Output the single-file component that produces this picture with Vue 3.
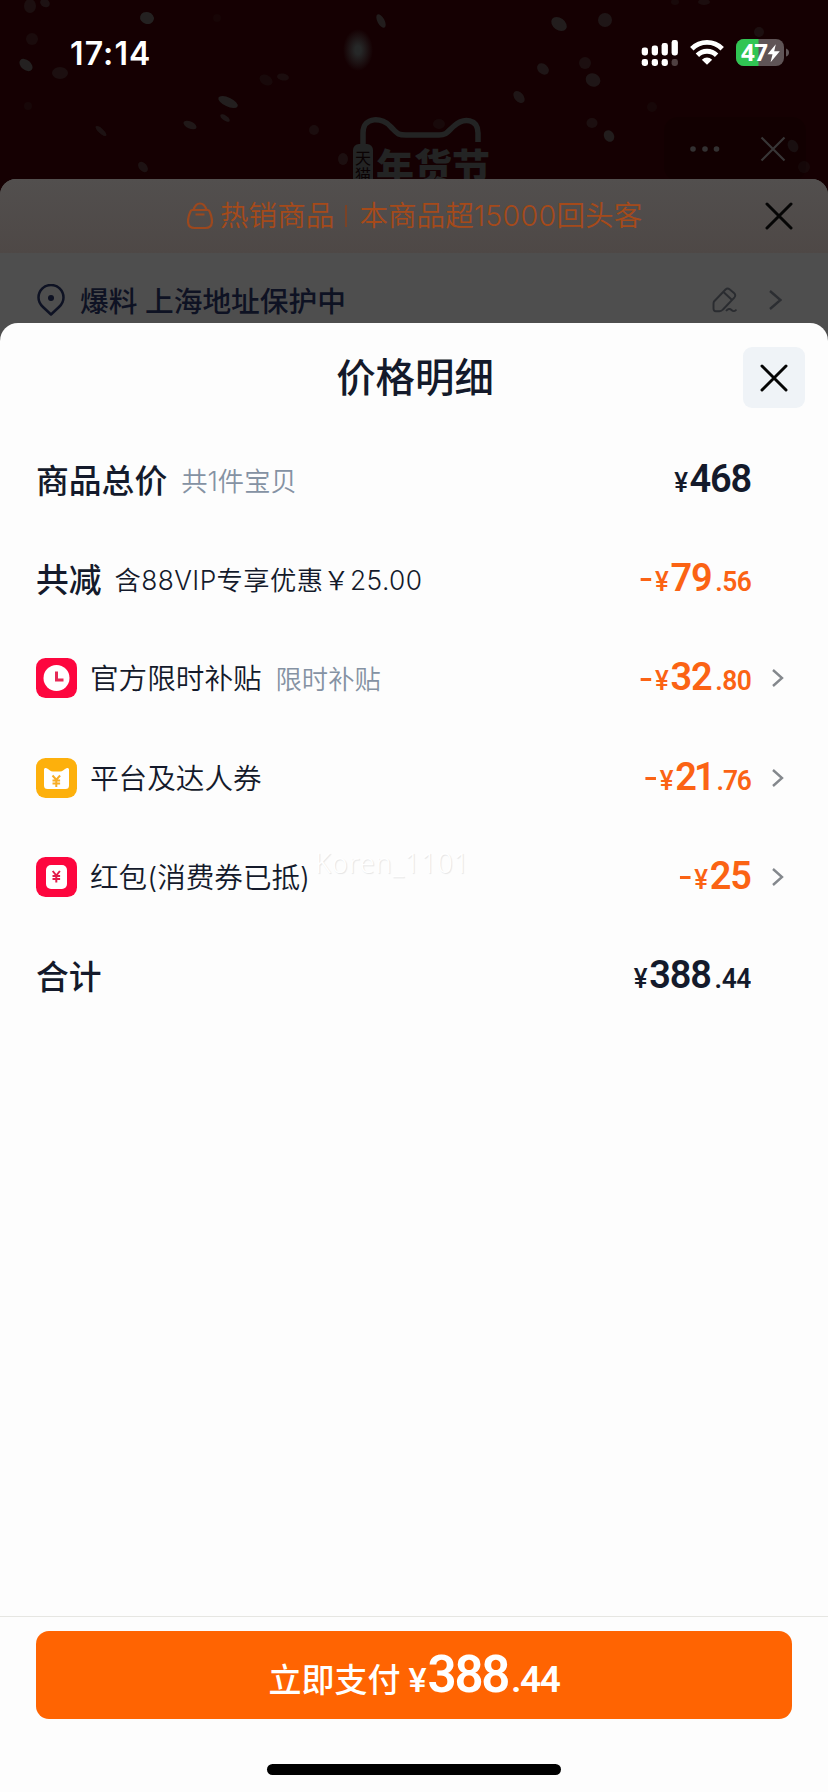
<script setup>
const rows = [
  { label: '商品总价', strong: true, note: '共1件宝贝', int: '468', dec: '', dark: true },
  { label: '共减', strong: true, note: '含88VIP专享优惠￥25.00', noteDark: true, minus: true, int: '79', dec: '.56' },
  { label: '官方限时补贴', icon: 'clock', note: '限时补贴', minus: true, int: '32', dec: '.80', arrow: true },
  { label: '平台及达人券', icon: 'coupon', minus: true, int: '21', dec: '.76', arrow: true, tight: true },
  { label: '红包(消费券已抵)', icon: 'packet', minus: true, int: '25', dec: '', arrow: true },
  { label: '合计', strong: true, int: '388', dec: '.44', dark: true },
]

// [x, y, rx, ry, rotation, opacity]
const flakes = [
  [30, 6, 6, 7, 0, 0.35], [45, 3, 5, 4, 30, 0.4], [147, 18, 7, 6, 15, 0.75], [32, 39, 6, 6, 0, 0.25],
  [26, 65, 7.5, 5, 40, 0.75], [60, 73, 8, 6, 0, 0.35], [28, 106, 4, 4, 0, 0.15], [217, 18, 4, 4, 0, 0.12],
  [228, 102, 10.5, 4.5, 25, 0.7], [225, 118, 5.5, 2.5, 35, 0.5], [190, 125, 7, 3.5, 25, 0.55],
  [101, 131, 7, 2.5, 42, 0.4], [143, 167, 6, 4, 50, 0.4], [266, 80, 7, 5, 30, 0.2], [283, 77, 6, 3.5, 10, 0.3],
  [314, 130, 5, 5, 0, 0.3], [343, 159, 5, 6, 0, 0.35], [381, 21, 7.5, 3.5, 62, 0.65],
  [559, 24, 8.5, 6, 35, 0.65], [605, 20, 7, 7, 0, 0.5], [543, 69, 6.5, 5, 40, 0.5], [585, 63, 6, 6, 0, 0.35],
  [593, 80, 7.5, 6.5, 25, 0.5], [519, 97, 7, 4.5, 50, 0.5], [592, 123, 5.5, 5, 0, 0.35], [609, 136, 5, 6, -30, 0.65],
  [759, 32, 5, 5, 0, 0.35], [652, 107, 5, 5, 0, 0.15], [793, 146, 5, 6.5, -30, 0.4], [804, 167, 6, 6, 0, 0.2],
  [439, 124, 6, 5, 0, 0.2], [704, 2, 6, 3, 0, 0.3], [675, 2, 4, 3, 0, 0.2],
]
</script>

<template>
  <div class="screen">
    <header class="top">
      <svg class="festival" width="828" height="179" viewBox="0 0 828 179">
        <defs>
          <radialGradient id="glow"><stop offset="0.2" stop-color="#262828" /><stop offset="1" stop-color="#262828" stop-opacity="0" /></radialGradient>
        </defs>
        <ellipse v-for="(f, i) in flakes" :key="i" :cx="f[0]" :cy="f[1]" :rx="f[2]" :ry="f[3]" :opacity="f[5]" :transform="`rotate(${f[4]} ${f[0]} ${f[1]})`" fill="#2a2c2c" />
        <ellipse cx="358" cy="50" rx="15" ry="21" fill="url(#glow)" />
        <path d="M363 144V133C363 116 383 117 391 127C398 134 398 135 406 135H439C447 135 448 131 454 126C464 117 478 119 478 133V142" fill="none" stroke="#232424" stroke-width="5.500" />
        <rect x="353" y="144" width="20" height="45" rx="6" fill="#232424" />
        <text x="363" y="164" class="tmall">天</text>
        <text x="363" y="181" class="tmall">猫</text>
        <text x="376" y="181" class="nianhuo">年货节</text>
        <rect x="664" y="117" width="142" height="64" rx="14" fill="#000" opacity="0.12" />
        <g fill="#333132"><circle cx="693" cy="149" r="2.800" /><circle cx="705" cy="149" r="2.800" /><circle cx="716.500" cy="149" r="2.800" /></g>
        <path d="M761.500 137.500L784.500 160.500M784.500 137.500L761.500 160.500" stroke="#383637" stroke-width="2.200" />
      </svg>
      <div class="status">
        <span class="time">17:14</span>
        <svg width="150" height="30" viewBox="640 38 150 30">
          <g fill="#fff">
            <rect x="641.700" y="47.500" width="6.300" height="8" rx="2.400" /><rect x="651.700" y="45.500" width="6.300" height="10" rx="2.400" />
            <rect x="661.600" y="43" width="6.300" height="12.500" rx="2.400" /><rect x="671.600" y="40" width="6.300" height="15.500" rx="2.400" />
            <rect x="641.700" y="59" width="6.300" height="7" rx="2.400" /><rect x="651.700" y="59" width="6.300" height="7" rx="2.400" />
            <rect x="661.600" y="59" width="6.300" height="7" rx="2.400" /><rect x="671.600" y="59" width="6.300" height="7" rx="2.400" opacity="0.25" />
            <path d="M707 64.700L701.800 59.700Q707 55.300 712.200 59.700Z" />
          </g>
          <path d="M691.800 48.700A21.500 21.500 0 0 1 722.200 48.700M697.400 55.200A13.600 13.600 0 0 1 716.600 55.200" fill="none" stroke="#fff" stroke-width="4.800" />
          <rect x="736" y="39" width="48" height="27" rx="8" fill="#5f5456" />
          <path d="M758.500 39H744A8 8 0 0 0 736 47V58A8 8 0 0 0 744 66H758.500Z" fill="#30c553" />
          <path d="M786 48.500Q789 49.500 789 52.500T786 56.500Z" fill="#5f5456" />
          <text x="741" y="60.800" class="battery">47</text>
          <path d="M775.800 44.200L767.500 54.300H772.500L770.600 62.200L779.800 51.200H774.200Z" fill="#fff" />
        </svg>
      </div>
    </header>

    <section class="order">
      <div class="hot">
        <svg class="bag" width="26" height="28" viewBox="0 0 26 28" fill="none" stroke="#9c481e" stroke-width="2.200">
          <path d="M5.500 8H20.500Q22 8 22.600 9.500Q25 15 25 19Q25 26 18.500 26H7.500Q1 26 1 19Q1 15 3.400 9.500Q4 8 5.500 8ZM6.500 8C8 3 10 1.500 13 1.500S18 3 19.500 8M8.500 12.500H17.500" />
        </svg>
        <span>热销商品</span><i class="bar"></i><span>本商品超<span class="num">15000</span>回头客</span>
        <svg class="hot-close" width="28" height="28" viewBox="0 0 28 28"><path d="M2 2L26 26M26 2L2 26" stroke="#050505" stroke-width="3" stroke-linecap="round" /></svg>
      </div>
      <div class="address">
        <svg width="28" height="32" viewBox="0 0 28 32"><path d="M14 30.500L6 23Q1.500 18.800 1.500 13.500A12.500 12.500 0 0 1 26.500 13.500Q26.500 18.800 22 23Z" fill="none" stroke="#0e1223" stroke-width="2.500" stroke-linejoin="round" /><circle cx="14" cy="14" r="3" fill="#0e1223" /></svg>
        <span class="addr-text">爆料 上海地址保护中</span>
        <svg width="25" height="26" viewBox="0 0 25 26" fill="none" stroke="#2a2c30" stroke-width="1.900"><path d="M2 14.500L13.500 2.500Q15.500 .8 17.500 2.300L22 6Q24.200 8 22.500 10.300L11 22.500Q9.500 24.300 7.500 24.300H4Q1.500 24.300 1.500 21.500V17Q1.500 15.500 2 14.500ZM11.500 5L19.500 12.500M14 24Q17 20.500 19.500 23T24.500 22.500" /></svg>
        <svg class="addr-arrow" width="13" height="20" viewBox="0 0 13 20"><path d="M1 1L11.500 10L1 19" fill="none" stroke="#2c2e32" stroke-width="2.400" /></svg>
      </div>
    </section>

    <main class="sheet">
      <div class="head">
        <h1>价格明细</h1>
        <button class="close" aria-label="关闭">
          <svg width="28" height="28" viewBox="0 0 28 28"><path d="M2 2L26 26M26 2L2 26" stroke="#050505" stroke-width="3" stroke-linecap="round" /></svg>
        </button>
      </div>

      <div class="rows">
        <div v-for="r in rows" :key="r.label" class="row">
          <svg v-if="r.icon" class="icon" width="41" height="40" viewBox="0 0 41 40">
            <rect width="41" height="40" rx="9.500" :fill="r.icon === 'coupon' ? '#fdb00c' : '#fd063e'" />
            <template v-if="r.icon === 'clock'">
              <circle cx="20.500" cy="20" r="13" fill="#fff" /><path d="M20.500 13.500V22H27.500" fill="none" stroke="#e62a57" stroke-width="3" />
            </template>
            <template v-else-if="r.icon === 'coupon'">
              <path d="M8 11.500Q8 9.500 10 10Q12 10.500 14 12.500Q15 13.500 17 13.500H24Q26 13.500 27 12.500Q29 10.500 31 10Q33 9.500 33 11.500V27.500Q33 31 29.500 31H11.500Q8 31 8 27.500Z" fill="#fff" />
              <path d="M16.500 17.500L20.300 21.700L24.100 17.500M20.300 21.500V29M16.500 22.500H24.100M16.500 25.500H24.100" fill="none" stroke="#f7ad25" stroke-width="2" />
            </template>
            <template v-else>
              <rect x="10" y="8" width="21" height="24" rx="5" fill="#fff" />
              <path d="M16.700 14L20.300 18.500L23.900 14M20.300 18V25.500M16.500 19H24.100M16.500 22H24.100" fill="none" stroke="#e21c4a" stroke-width="2" />
            </template>
          </svg>
          <span class="label" :class="{ strong: r.strong }">{{ r.label }}</span>
          <span v-if="r.note" class="note" :class="{ 'note-dark': r.noteDark }">{{ r.note }}</span>
          <span class="price" :class="{ dark: r.dark, tight: r.tight }"><i v-if="r.minus" class="minus"></i><span class="yen">¥</span><span class="int">{{ r.int }}</span><span v-if="r.dec" class="dec">{{ r.dec }}</span></span>
          <span class="arrow"><svg v-if="r.arrow" width="12" height="18" viewBox="0 0 12 18"><path d="M1 1L10 9L1 17" fill="none" stroke="#84888d" stroke-width="2.400" /></svg></span>
        </div>
      </div>
      <span class="mark">Koren_1101</span>

      <footer class="foot">
        <button class="pay"><span class="pay-text">立即支付</span><span class="pay-yen">¥</span><span class="pay-int">388</span><span class="pay-dec">.44</span></button>
        <div class="home"></div>
      </footer>
    </main>
  </div>
</template>

<style>
body { background: #fdfdfd; }
</style>

<style scoped>
* { box-sizing: border-box; }
.screen { width: 828px; height: 1792px; overflow: hidden; display: flex; flex-direction: column; background: #150002; font-family: Inter, "Noto Sans CJK SC", sans-serif; color: #141a2b; }
.top { height: 179px; flex: none; position: relative; }
.festival { position: absolute; inset: 0; }
.tmall { font: 400 16px "Noto Sans CJK SC", sans-serif; text-anchor: middle; fill: #0a0203; }
.nianhuo { font: 900 38px "Noto Sans CJK SC", sans-serif; fill: #232424; }
.status { position: relative; display: flex; justify-content: space-between; padding: 38px 38px 0 70px; }
.time { color: #fff; font-size: 32px; font-weight: 600; line-height: 32px; letter-spacing: 1.100px; }
.battery { font: 700 24px "Noto Sans", sans-serif; fill: #fff; letter-spacing: -0.500px; }

.order { height: 164px; flex: none; border-radius: 16px 16px 0 0; background: #4e4e4e; overflow: hidden; }
.hot { height: 74px; display: flex; align-items: center; padding-left: 187px; position: relative; background: linear-gradient(#524f4e, #4e4846); color: #a54a1a; font-size: 28.600px; font-weight: 350; line-height: 40px; white-space: nowrap; }
.hot > span { margin-top: -1px; }
.bag { margin-right: 7px; }
.bar { width: 2px; height: 22px; background: #7a4226; margin: 0 12px 0 11px; }
.num { letter-spacing: 0.300px; }
.hot-close { position: absolute; left: 765px; top: 23px; }
.address { display: flex; align-items: center; height: 94px; padding-left: 37px; }
.addr-text { font-size: 28.700px; font-weight: 500; margin: -2px 0 0 15px; color: #0e1223; flex: 1; }
.addr-arrow { margin: 0 46px 0 32px; }

.sheet { flex: 1; margin-top: -20px; border-radius: 18px 18px 0 0; background: #fdfdfd; display: flex; flex-direction: column; position: relative; }
.head { height: 107px; display: flex; justify-content: flex-end; padding: 24px 23px 0 0; position: relative; }
h1 { position: absolute; left: 2px; right: 0; top: 25px; margin: 0; text-align: center; font-size: 39.400px; line-height: 60px; font-weight: 500; }
.close { position: relative; width: 62px; height: 61px; padding: 0; border: 0; border-radius: 9px; background: #eff3f7; display: grid; place-items: center; }
.rows { padding: 0 35px 0 36px; }
.row { height: 99.300px; display: flex; align-items: center; white-space: nowrap; }
.icon { margin-right: 13px; }
.label { font-size: 28.600px; font-weight: 350; margin-top: -3px; }
.strong { font-size: 32.800px; font-weight: 500; }
.note { font-size: 26.300px; font-weight: 350; color: #8592a3; margin: -1px 0 0 14px; }
.note-dark { color: #141a2b; letter-spacing: 0.400px; margin-left: 13px; }
.price { margin-left: auto; display: flex; align-items: baseline; font-family: Roboto, sans-serif; font-weight: 500; color: #fb6314; line-height: 46px; position: relative; top: 1px; transform: scaleX(0.960); transform-origin: right; }
.price.dark { color: #141a2b; }
.minus { width: 11px; height: 3px; background: currentColor; align-self: center; margin-right: 4px; }
.yen { font-size: 27px; width: 15px; letter-spacing: -1px; }
.int { font-size: 39.500px; font-weight: 600; letter-spacing: -1.200px; margin-left: 1px; }
.dec { font-size: 27.500px; font-weight: 600; letter-spacing: -0.500px; margin-left: 4px; }
.tight .int { letter-spacing: -3px; }
.tight .dec { margin-left: 4px; letter-spacing: -1.200px; }
.arrow { width: 42px; display: flex; padding-left: 21px; }
.mark { position: absolute; left: 315px; top: 522px; font: 300 27px/36px "Noto Sans", sans-serif; letter-spacing: 0.900px; color: #fff; text-shadow: 1px 1px 1px #e4e4e4; }

.foot { margin-top: auto; height: 176px; border-top: 1px solid #e6e6e2; padding: 14px 36px 0; display: flex; flex-direction: column; align-items: center; }
.pay { width: 756px; height: 88px; border: 0; border-radius: 13px; background: #ff6402; color: #fff; display: flex; align-items: baseline; justify-content: center; padding: 0; line-height: 88px; font-family: Roboto, sans-serif; font-weight: 500; }
.pay-text { font-family: "Noto Sans CJK SC", sans-serif; font-size: 33px; font-weight: 500; }
.pay-yen { font-size: 34px; margin-left: 7px; width: 20px; }
.pay-int { font-size: 51px; font-weight: 600; letter-spacing: -2.300px; }
.pay-dec { font-size: 37px; font-weight: 600; letter-spacing: -1.500px; margin-left: 3px; }
.home { width: 294px; height: 11px; border-radius: 6px; background: #000; margin-top: 45px; }
</style>
